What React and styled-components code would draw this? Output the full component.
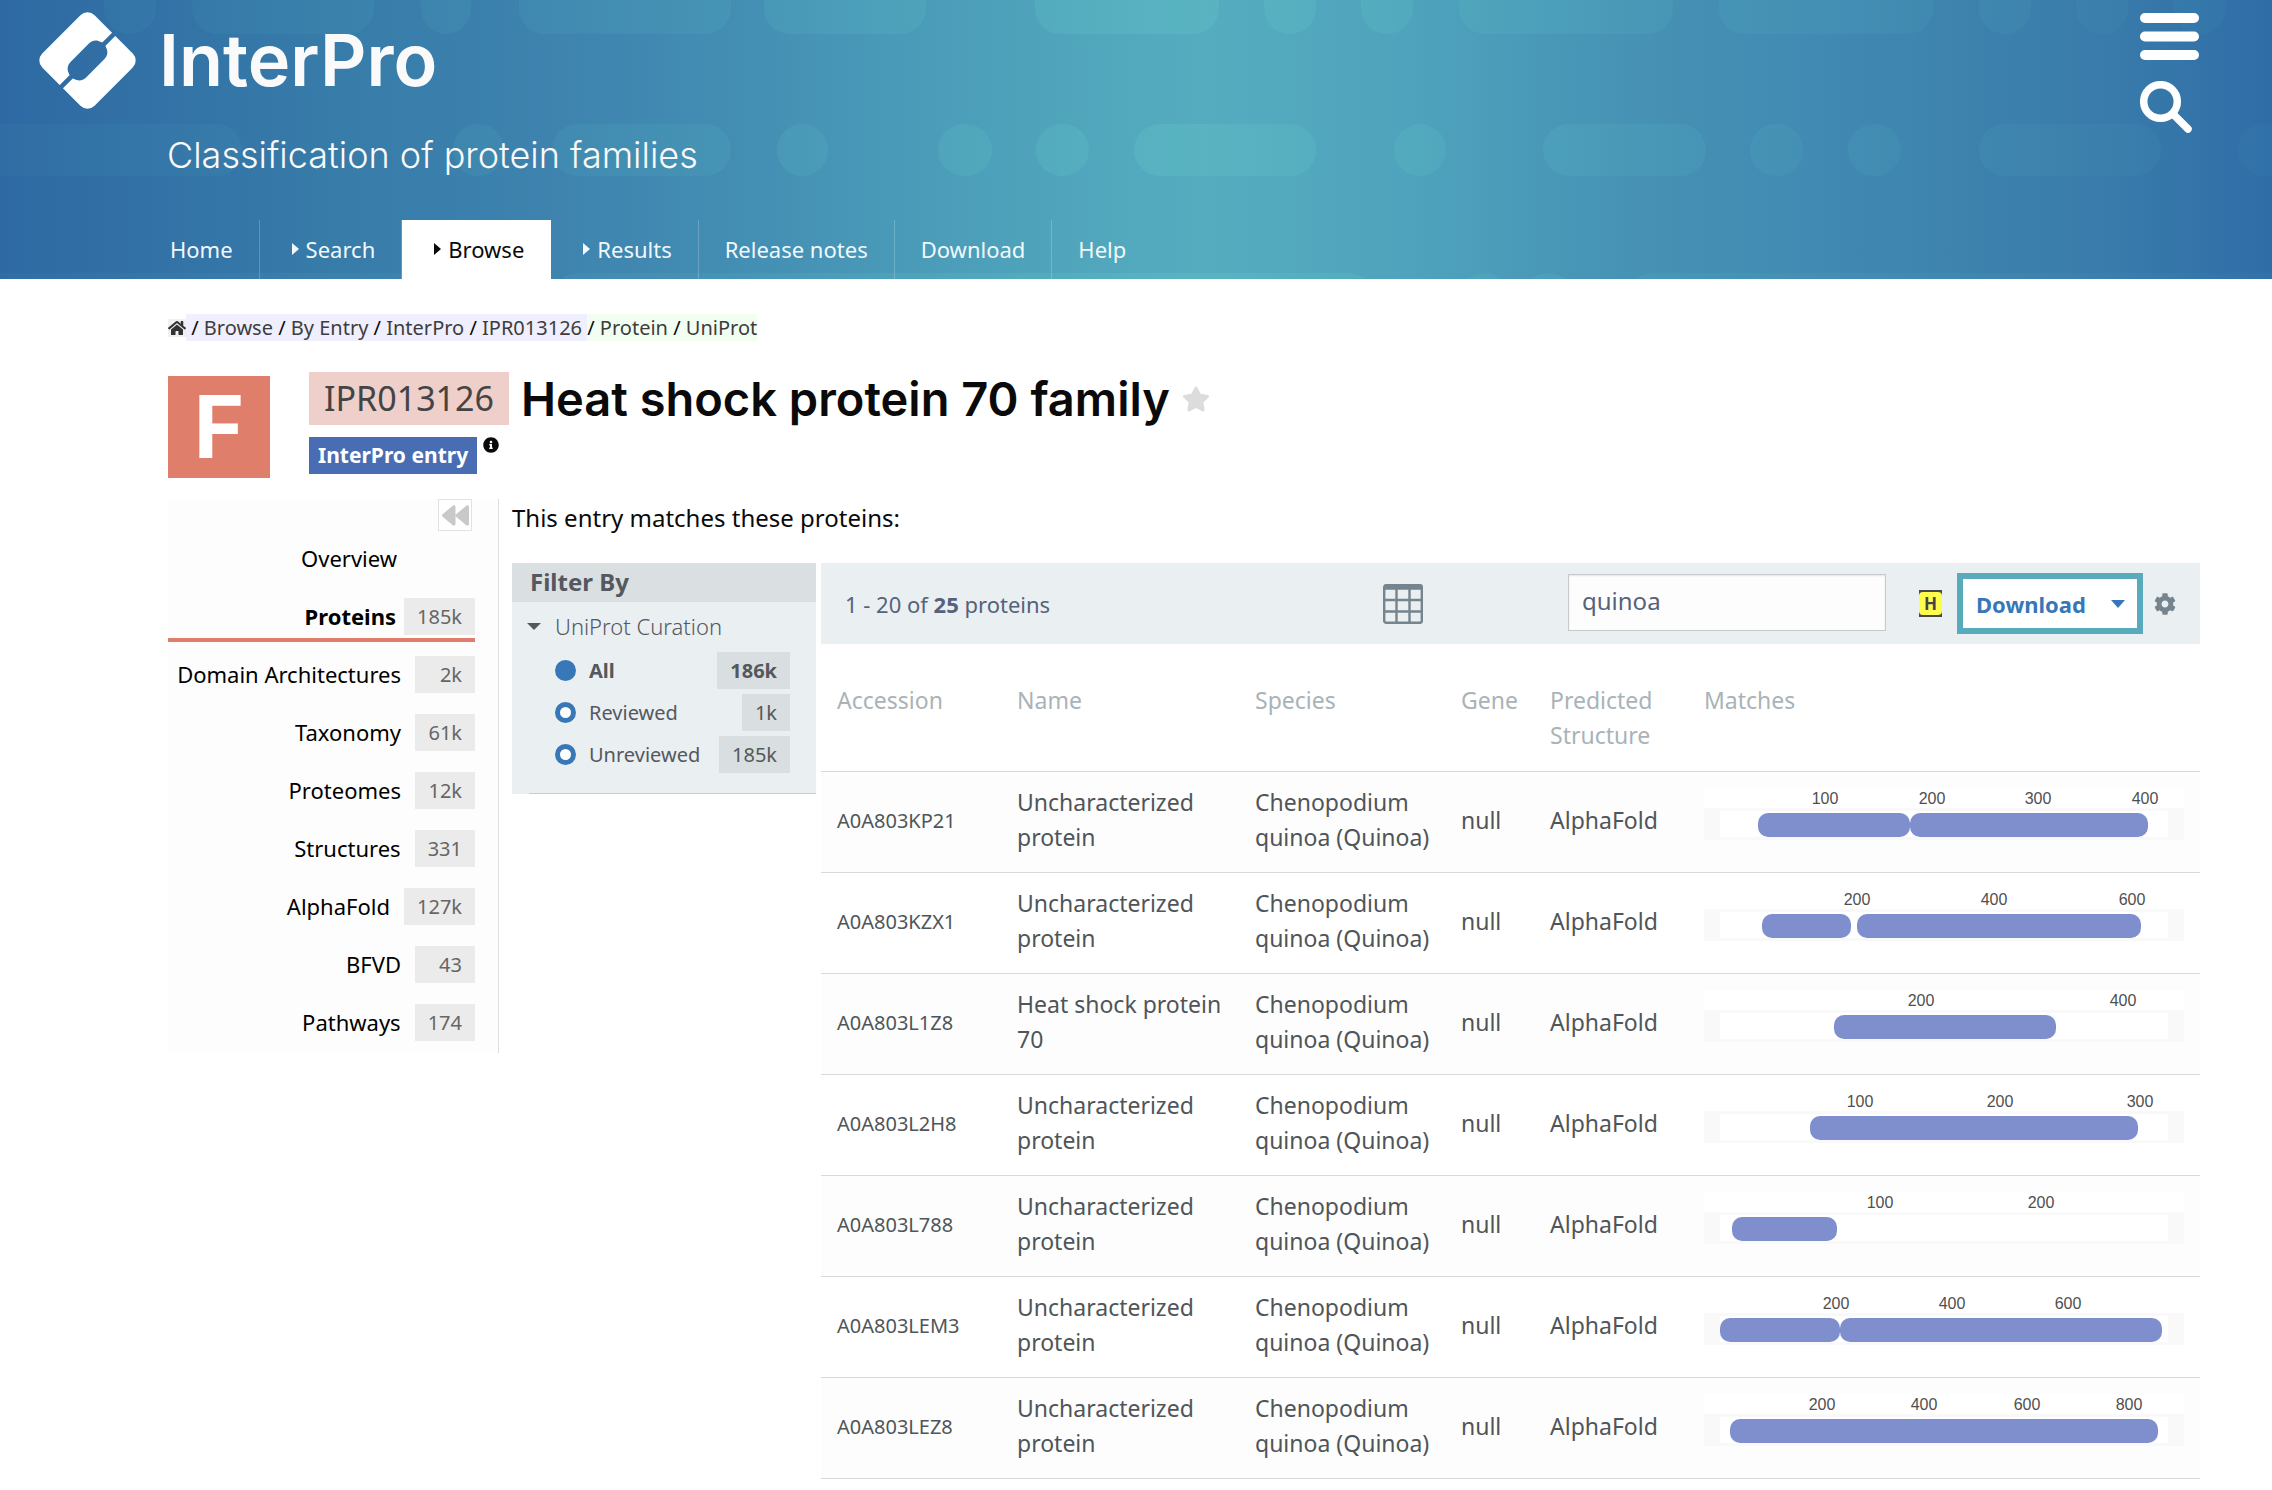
import React from "react";
import styled, { createGlobalStyle } from "styled-components";
import { FaBackward, FaCog, FaHome, FaInfoCircle, FaStar } from "react-icons/fa";

const sans = '"Noto Sans", "Open Sans", sans-serif';
const display = 'Inter, "Noto Sans", sans-serif';

const GlobalStyle = createGlobalStyle`
  *, *::before, *::after { box-sizing: border-box; }
  body { margin: 0; background: #fff; color: #0a0a0a; font-family: ${sans}; font-size: 22px; }
  a { color: inherit; text-decoration: none; }
  button, input { font-family: inherit; }
`;

const Banner = styled.header`
  position: relative;
  overflow: hidden;
  color: #fafafa;
  background: linear-gradient(90deg, #2e69a3 0%, #377ba9 14%, #3e84af 25%, #438db3 32%, #4999b8 39%,
    #4fa4bb 46%, #55acbf 53%, #4fa3bc 62%, #4998b8 68%, #458fb3 74%, #418ab3 80%, #3d83ae 86%, #397bab 93%, #2f6da7 100%);
`;

const Pattern = styled.svg`
  position: absolute;
  inset: 0;
  width: 100%;
  height: 100%;
`;

const BannerTop = styled.div`
  position: relative;
  display: flex;
  justify-content: space-between;
  height: 220px;
  padding: 0 73px 0 39px;
`;

const Brand = styled.a`
  display: flex;
  align-items: center;
  gap: 23px;
  height: 120px;
`;

const BrandName = styled.h1`
  margin: 0;
  font-family: ${display};
  font-size: 72px;
  font-weight: 600;
  line-height: 120px;
`;

const Tagline = styled.p`
  margin: 12px 0 0 128px;
  font-family: ${display};
  font-size: 36px;
  font-weight: 300;
  line-height: 46px;
`;

const BannerTools = styled.div`
  display: flex;
  flex-direction: column;
  gap: 21px;
  padding-top: 13px;
`;

const PlainButton = styled.button`
  display: flex;
  padding: 0;
  border: 0;
  background: none;
  color: inherit;
`;

const Tabs = styled.nav`
  position: relative;
  display: flex;
  padding-left: 144px;
`;

const Tab = styled.a`
  display: flex;
  align-items: center;
  gap: 7px;
  height: 59px;
  padding: 0 26px 2px ${(p) => (p.$menu ? 32 : 26)}px;
  border-right: 1px solid ${(p) => (p.$last || p.$active ? "transparent" : "rgba(255,255,255,0.2)")};
  background: ${(p) => (p.$active ? "#fff" : "transparent")};
  color: ${(p) => (p.$active ? "#0a0a0a" : "#f2f8fb")};
  font-size: 22px;
  &::before {
    content: "";
    display: ${(p) => (p.$menu ? "block" : "none")};
    border: 6px solid transparent;
    border-left: 7px solid currentColor;
    border-right: 0;
  }
`;

const Page = styled.div`
  padding: 35px 72px 0 168px;
`;

const Crumbs = styled.nav`
  display: flex;
  align-items: center;
  height: 27px;
  font-size: 20px;
  line-height: 27px;
  white-space: pre;
`;

const HomeLink = styled.a`
  display: flex;
  background: #f0f0f0;
  color: #333;
`;

const CrumbGroup = styled.span`
  background: ${(p) => p.$tone};
  a { color: #3d3d3d; }
`;

const EntryHead = styled.div`
  display: flex;
  gap: 39px;
  padding-top: 31px;
`;

const TypeBadge = styled.div`
  width: 102px;
  height: 102px;
  margin-top: 4px;
  background: #df7e6b;
  color: #fff;
  font-family: ${display};
  font-size: 86px;
  font-weight: 700;
  line-height: 102px;
  text-align: center;
`;

const EntryInfo = styled.div`
  display: flex;
  flex-direction: column;
  gap: 12px;
`;

const EntryRow = styled.div`
  display: flex;
  align-items: ${(p) => (p.$top ? "flex-start" : "center")};
  gap: ${(p) => (p.$top ? 6 : 12)}px;
`;

const Accession = styled.span`
  padding: 0 15px;
  background: #efcfca;
  color: #444;
  font-size: 34px;
  line-height: 53px;
`;

const EntryTitle = styled.h2`
  margin: 0;
  font-family: ${display};
  font-size: 47px;
  font-weight: 600;
  line-height: 53px;
`;

const Tag = styled.span`
  padding: 0 9px;
  background: #486db2;
  color: #fff;
  font-size: 21px;
  font-weight: 700;
  line-height: 37px;
`;

const Columns = styled.div`
  display: grid;
  grid-template-columns: 331px minmax(0, 1fr);
  gap: 13px;
  align-items: start;
  padding-top: 21px;
`;

const Sidebar = styled.aside`
  display: flex;
  flex-direction: column;
  padding-right: 23px;
  border-right: 1px solid #e0e0e0;
  background: #fdfdfd;
`;

const Collapse = styled.button`
  display: flex;
  align-items: center;
  justify-content: center;
  align-self: flex-end;
  width: 34px;
  height: 32px;
  margin-right: 3px;
  padding: 0;
  border: 1px solid #e2e2e2;
  background: #fff;
  color: #c9c9c9;
`;

const SideLink = styled.a`
  display: flex;
  align-items: center;
  justify-content: flex-end;
  gap: ${(p) => (p.$active ? 8 : 14)}px;
  margin: 9px 0 5px;
  padding: 0 ${(p) => (p.$bare ? 78 : 0)}px 3px 0;
  border-bottom: 4px solid ${(p) => (p.$active ? "#df7e6b" : "transparent")};
  color: #000;
  font-size: 22px;
  font-weight: ${(p) => (p.$active ? 700 : 400)};
  line-height: 37px;
  white-space: nowrap;
`;

const Count = styled.span`
  min-width: ${(p) => (p.$filter ? 48 : 60)}px;
  padding: 0 13px;
  background: ${(p) => (p.$filter ? "#d9dee0" : "#ebebeb")};
  color: ${(p) => (p.$filter ? "#54585b" : "#666")};
  font-size: 20px;
  font-weight: ${(p) => (p.$strong ? 700 : 400)};
  line-height: 37px;
  text-align: right;
`;

const Intro = styled.p`
  margin: 0 0 26px;
  font-size: 24px;
  line-height: 38px;
`;

const Browser = styled.div`
  display: grid;
  grid-template-columns: 304px minmax(0, 1fr);
  gap: 5px;
  align-items: start;
`;

const Filters = styled.section`
  background: #eaeff2;
  color: #54585f;
`;

const FiltersHead = styled.h3`
  margin: 0;
  padding: 0 18px 2px;
  background: #dadfe1;
  font-size: 24px;
  font-weight: 700;
  line-height: 37px;
`;

const FilterGroup = styled.fieldset`
  margin: 0 0 0 17px;
  padding: 0 26px 20px 0;
  border: 0;
  border-bottom: 1px solid #c9cdcf;
`;

const FilterLegend = styled.legend`
  display: flex;
  align-items: center;
  gap: 14px;
  width: 100%;
  height: 50px;
  margin: 0;
  padding: 0 0 2px;
  font-size: 22px;
  font-weight: 300;
  line-height: 48px;
  &::before {
    content: "";
    margin-left: -2px;
    border: 7px solid transparent;
    border-top-color: #54585f;
    border-bottom: 0;
  }
`;

const FilterOption = styled.label`
  display: flex;
  align-items: center;
  height: 37px;
  margin-bottom: 5px;
  padding-left: 26px;
  font-size: 20px;
  font-weight: ${(p) => (p.$strong ? 700 : 400)};
  &:last-of-type { margin-bottom: 0; }
`;

const Radio = styled.input`
  appearance: none;
  width: 21px;
  height: 21px;
  margin: 0 13px 0 0;
  border: 5px solid #3878b8;
  border-radius: 50%;
  background: #fff;
  &:checked { background: #3878b8; }
`;

const OptionName = styled.span`
  flex: 1;
`;

const Toolbar = styled.div`
  display: flex;
  align-items: center;
  height: 81px;
  padding: 0 24px;
  background: #eaeff2;
  color: #76848d;
`;

const Summary = styled.p`
  flex: 1;
  margin: 0;
  color: #56627b;
  font-size: 22px;
`;

const GridButton = styled(PlainButton)`
  margin-right: 145px;
`;

const SearchInput = styled.input`
  width: 318px;
  height: 57px;
  margin: 0 33px 3px 0;
  padding: 0 13px 3px;
  border: 1px solid #c7cacc;
  background: #fdfdfd;
  box-shadow: inset 0 1px 2px rgba(10, 10, 10, 0.1);
  color: #56627b;
  font-size: 24px;
`;

const Highlight = styled.button`
  width: 23px;
  height: 27px;
  margin-right: 15px;
  padding: 0;
  border: 0;
  background: #484848;
`;

const HighlightFace = styled.span`
  display: block;
  margin: 2px 0;
  border-radius: 4px;
  background: #fffd4b;
  color: #444;
  font-size: 17px;
  font-weight: 700;
  line-height: 23px;
`;

const Download = styled.button`
  display: flex;
  align-items: center;
  justify-content: space-between;
  width: 186px;
  height: 61px;
  margin-right: 11px;
  padding: 0 12px 0 13px;
  border: 6px solid #5aaabd;
  background: #fff;
  color: #3777b7;
  font-size: 22px;
  font-weight: 700;
  &::after {
    content: "";
    border: 7px solid transparent;
    border-top: 8px solid currentColor;
    border-bottom: 0;
  }
`;

const Table = styled.table`
  width: 100%;
  table-layout: fixed;
  border-collapse: collapse;
`;

const HeadCell = styled.th`
  width: ${(p) => (p.$width ? `${p.$width}px` : "auto")};
  padding: 39px 0 18px 16px;
  color: #a9b3b8;
  font-size: 23px;
  font-weight: 400;
  line-height: 35px;
  text-align: left;
  vertical-align: top;
`;

const Row = styled.tr`
  border-top: 1px solid #d5dbdd;
  &:nth-child(odd) { background: #fdfdfd; }
  &:last-child { border-bottom: 1px solid #d5dbdd; }
`;

const Cell = styled.td`
  padding: 13px 0 17px 16px;
  color: #4f5558;
  font-size: ${(p) => (p.$small ? 20 : 23)}px;
  line-height: 35px;
  vertical-align: middle;
`;

const Track = styled.svg`
  display: block;
  width: 480px;
  height: 52px;
  margin-bottom: 12px;
`;

const pillRows = [
  [-5, [[104, 156], [192, 374], [421, 471], [519, 731], [764, 926], [1035, 1219], [1264, 1316], [1361, 1413], [1459, 1673], [1719, 1933], [1979, 2031], [2076, 2128], [2174, 2226]]],
  [150, [[-30, 242], [453, 504], [552, 731], [777, 828], [938, 992], [1036, 1089], [1134, 1316], [1394, 1446], [1543, 1706], [1750, 1803], [1848, 1901], [1979, 2161], [2238, 2290]]],
  [299, [[-30, 540], [552, 1374], [1458, 1510], [1522, 1574], [1626, 2300]]],
];

const tabs = [
  { name: "Home" },
  { name: "Search", menu: true },
  { name: "Browse", menu: true, active: true },
  { name: "Results", menu: true },
  { name: "Release notes" },
  { name: "Download" },
  { name: "Help", last: true },
];

const entryCrumbs = ["Browse", "By Entry", "InterPro", "IPR013126"];
const proteinCrumbs = ["Protein", "UniProt"];

const sections = [
  ["Overview"],
  ["Proteins", "185k"],
  ["Domain Architectures", "2k"],
  ["Taxonomy", "61k"],
  ["Proteomes", "12k"],
  ["Structures", "331"],
  ["AlphaFold", "127k"],
  ["BFVD", "43"],
  ["Pathways", "174"],
];

const curation = [["All", "186k"], ["Reviewed", "1k"], ["Unreviewed", "185k"]];

const columns = [["Accession", 180], ["Name", 238], ["Species", 206], ["Gene", 89], ["Predicted Structure", 154], ["Matches"]];

const proteins = [
  { id: "A0A803KP21", ticks: [[100, 121], [200, 228], [300, 334], [400, 441]], bars: [[54, 206], [206, 444]] },
  { id: "A0A803KZX1", ticks: [[200, 153], [400, 290], [600, 428]], bars: [[58, 147], [153, 437]] },
  { id: "A0A803L1Z8", name: "Heat shock protein 70", ticks: [[200, 217], [400, 419]], bars: [[130, 352]] },
  { id: "A0A803L2H8", ticks: [[100, 156], [200, 296], [300, 436]], bars: [[106, 434]] },
  { id: "A0A803L788", ticks: [[100, 176], [200, 337]], bars: [[28, 133]] },
  { id: "A0A803LEM3", ticks: [[200, 132], [400, 248], [600, 364]], bars: [[16, 136], [136, 458]] },
  { id: "A0A803LEZ8", ticks: [[200, 118], [400, 220], [600, 323], [800, 425]], bars: [[26, 454]] },
];

function BannerPattern() {
  return (
    <Pattern viewBox="0 0 2272 279" preserveAspectRatio="xMidYMin slice" aria-hidden="true">
      <defs>
        <linearGradient id="pill-tone" gradientUnits="userSpaceOnUse" x1="0" y1="0" x2="2272" y2="0">
          <stop offset="0" stopColor="#4fb5c0" stopOpacity="0.06" />
          <stop offset="0.3" stopColor="#5cc4c4" stopOpacity="0.12" />
          <stop offset="0.52" stopColor="#66ccca" stopOpacity="0.24" />
          <stop offset="0.72" stopColor="#5cc4c4" stopOpacity="0.13" />
          <stop offset="1" stopColor="#4fb5c0" stopOpacity="0.05" />
        </linearGradient>
      </defs>
      <g fill="url(#pill-tone)">
        {pillRows.map(([middle, pills]) =>
          pills.map(([from, to]) => (
            <rect
              key={`${middle}-${from}`}
              x={from}
              y={middle - (middle < 0 ? 40 : 26)}
              width={to - from}
              height={middle < 0 ? 79 : 52}
              rx="26"
            />
          ))
        )}
      </g>
    </Pattern>
  );
}

function Logo() {
  return (
    <svg width="97" height="97" viewBox="0 0 97 97" aria-hidden="true">
      <defs>
        <mask id="logo-cut">
          <rect width="97" height="97" fill="#fff" />
          <g transform="rotate(-45 48.5 48.5)" fill="#000">
            <rect x="-4" y="46.2" width="105" height="4.6" />
            <path d="M35.500 37.500h26c4 0 7 2 8.500 5 1.200 2.600 1.700 4 1.700 6s-.5 3.400-1.700 6c-1.500 3-4.500 5-8.500 5h-26c-4 0-7-2-8.500-5-1.200-2.600-1.700-4-1.700-6s.5-3.400 1.700-6c1.500-3 4.500-5 8.500-5z" />
          </g>
        </mask>
      </defs>
      <g mask="url(#logo-cut)">
        <rect x="11.5" y="11.5" width="74" height="74" rx="10" fill="#fff" transform="rotate(45 48.5 48.5)" />
      </g>
    </svg>
  );
}

function MatchTrack({ ticks, bars }) {
  return (
    <Track viewBox="0 0 480 52">
      <rect width="480" height="20" fill="#fff" />
      <rect y="20" width="480" height="32" fill="#f9f9f9" />
      <rect x="16" y="23" width="448" height="26" fill="#fff" />
      {ticks.map(([label, x]) => (
        <text key={label} x={x} y="16" textAnchor="middle" fontFamily="'Liberation Sans', Arial, sans-serif" fontSize="16" fill="#4f4f4f">
          {label}
        </text>
      ))}
      {bars.map(([from, to]) => (
        <rect key={from} x={from} y="25" width={to - from} height="24" rx="10" fill="#7f8fce" />
      ))}
    </Track>
  );
}

export default function App() {
  return (
    <>
      <GlobalStyle />
      <Banner>
        <BannerPattern />
        <BannerTop>
          <div>
            <Brand href="#home">
              <Logo />
              <BrandName>InterPro</BrandName>
            </Brand>
            <Tagline>Classification of protein families</Tagline>
          </div>
          <BannerTools>
            <PlainButton aria-label="Menu">
              <svg width="59" height="47" viewBox="0 0 59 47" fill="#fff">
                <rect width="59" height="10" rx="5" />
                <rect y="18.5" width="59" height="10" rx="5" />
                <rect y="37" width="59" height="10" rx="5" />
              </svg>
            </PlainButton>
            <PlainButton aria-label="Search">
              <svg width="52" height="52" viewBox="0 0 52 52" fill="none" stroke="#fff">
                <circle cx="20.5" cy="20.5" r="16.8" strokeWidth="7.5" />
                <path d="M33 33l15 15" strokeWidth="7.5" strokeLinecap="round" />
              </svg>
            </PlainButton>
          </BannerTools>
        </BannerTop>
        <Tabs>
          {tabs.map((t) => (
            <Tab key={t.name} href="#tab" $menu={t.menu} $active={t.active} $last={t.last}>
              {t.name}
            </Tab>
          ))}
        </Tabs>
      </Banner>
      <Page>
        <Crumbs aria-label="Breadcrumb">
          <HomeLink href="#home" aria-label="Home"><FaHome size={18} /></HomeLink>
          <CrumbGroup $tone="#f0effe">
            {entryCrumbs.map((c) => (
              <React.Fragment key={c}> / <a href="#crumb">{c}</a></React.Fragment>
            ))}{" "}
          </CrumbGroup>
          <CrumbGroup $tone="#f2fef2">
            / <a href="#crumb">{proteinCrumbs[0]}</a> / <a href="#crumb">{proteinCrumbs[1]}</a>
          </CrumbGroup>
        </Crumbs>
        <EntryHead>
          <TypeBadge>F</TypeBadge>
          <EntryInfo>
            <EntryRow>
              <Accession>IPR013126</Accession>
              <EntryTitle>Heat shock protein 70 family</EntryTitle>
              <PlainButton aria-label="Favourite"><FaStar size={28} color="#dcdcdc" /></PlainButton>
            </EntryRow>
            <EntryRow $top>
              <Tag>InterPro entry</Tag>
              <FaInfoCircle size={16} />
            </EntryRow>
          </EntryInfo>
        </EntryHead>
        <Columns>
          <Sidebar>
            <Collapse aria-label="Collapse menu"><FaBackward size={27} /></Collapse>
            {sections.map(([name, count]) => (
              <SideLink key={name} href="#section" $active={name === "Proteins"} $bare={!count}>
                {name}
                {count && <Count>{count}</Count>}
              </SideLink>
            ))}
          </Sidebar>
          <main>
            <Intro>This entry matches these proteins:</Intro>
            <Browser>
              <Filters>
                <FiltersHead>Filter By</FiltersHead>
                <FilterGroup>
                  <FilterLegend>UniProt Curation</FilterLegend>
                  {curation.map(([name, count], i) => (
                    <FilterOption key={name} $strong={i === 0}>
                      <Radio type="radio" name="curation" defaultChecked={i === 0} />
                      <OptionName>{name}</OptionName>
                      <Count $filter $strong={i === 0}>{count}</Count>
                    </FilterOption>
                  ))}
                </FilterGroup>
              </Filters>
              <section>
                <Toolbar>
                  <Summary>1 - 20 of <b>25</b> proteins</Summary>
                  <GridButton aria-label="Table view">
                    <svg width="40" height="40" viewBox="0 0 40 40" fill="none" stroke="#76848d" strokeWidth="2.4">
                      <rect x="1.2" y="1.2" width="37.6" height="37.6" rx="2" />
                      <path d="M1 3.2h38" strokeWidth="5" />
                      <path d="M1 16h38M1 27.500h38M13.500 2v37M26.500 2v37" />
                    </svg>
                  </GridButton>
                  <SearchInput aria-label="Search proteins" defaultValue="quinoa" />
                  <Highlight aria-label="Highlight matches"><HighlightFace>H</HighlightFace></Highlight>
                  <Download>Download</Download>
                  <PlainButton aria-label="Settings"><FaCog size={22} /></PlainButton>
                </Toolbar>
                <Table>
                  <thead>
                    <tr>
                      {columns.map(([name, width]) => (
                        <HeadCell key={name} $width={width}>{name}</HeadCell>
                      ))}
                    </tr>
                  </thead>
                  <tbody>
                    {proteins.map((p) => (
                      <Row key={p.id}>
                        <Cell $small><a href="#protein">{p.id}</a></Cell>
                        <Cell>{p.name || "Uncharacterized protein"}</Cell>
                        <Cell>Chenopodium quinoa (Quinoa)</Cell>
                        <Cell>null</Cell>
                        <Cell><a href="#structure">AlphaFold</a></Cell>
                        <Cell><MatchTrack ticks={p.ticks} bars={p.bars} /></Cell>
                      </Row>
                    ))}
                  </tbody>
                </Table>
              </section>
            </Browser>
          </main>
        </Columns>
      </Page>
    </>
  );
}
